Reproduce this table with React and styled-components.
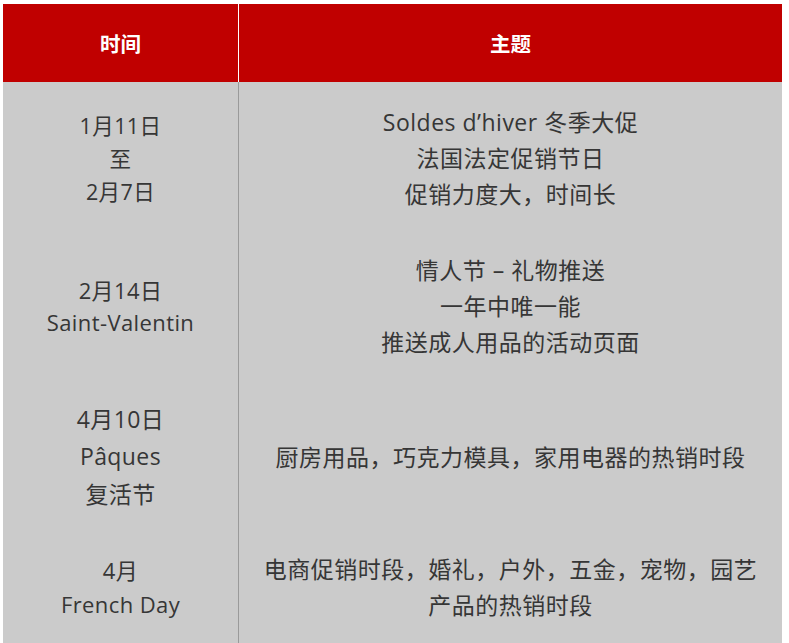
import React from "react";
import styled, { createGlobalStyle } from "styled-components";

const GlobalStyle = createGlobalStyle`
    html, body {
        margin: 0;
        padding: 0;
        background: #ffffff;
        overflow: hidden;
    }
`;

const rows = [
    {
        height: 152,
        dateSize: 21.5,
        dateLine: 33,
        date: ["1月11日", "至", "2月7日"],
        theme: ["Soldes d’hiver 冬季大促", "法国法定促销节日", "促销力度大，时间长"],
    },
    {
        height: 144,
        dateSize: 22,
        dateLine: 32,
        date: ["2月14日", "Saint-Valentin"],
        theme: ["情人节 – 礼物推送", "一年中唯一能", "推送成人用品的活动页面"],
    },
    {
        height: 158,
        dateSize: 23,
        dateLine: 37.5,
        date: ["4月10日", "Pâques", "复活节"],
        theme: ["厨房用品，巧克力模具，家用电器的热销时段"],
    },
    {
        height: 110,
        padBottom: 9,
        dateSize: 22,
        dateLine: 34,
        date: ["4月", "French Day"],
        theme: ["电商促销时段，婚礼，户外，五金，宠物，园艺产品的热销时段"],
    },
];

const App = () => {
    return (
        <Page>
            <GlobalStyle />
            <Table>
                <HeadRow>
                    <HeadCell>时间</HeadCell>
                    <HeadCell divider>主题</HeadCell>
                </HeadRow>
                {rows.map((row, i) => (
                    <BodyRow key={i} h={row.height} pb={row.padBottom || 0}>
                        <DateCell size={row.dateSize} line={row.dateLine}>
                            {row.date.map((t, j) => (
                                <span key={j}>{t}</span>
                            ))}
                        </DateCell>
                        <ThemeCell>
                            {row.theme.map((t, j) => (
                                <span key={j}>{t}</span>
                            ))}
                        </ThemeCell>
                    </BodyRow>
                ))}
            </Table>
        </Page>
    );
};

const Page = styled.div`
    padding: 4px 7px 0 3px;
    font-family: "Open Sans", "Noto Sans CJK SC", sans-serif;
`;

const Table = styled.div`
    width: 779px;
    display: flex;
    flex-direction: column;
`;

const HeadRow = styled.div`
    display: grid;
    grid-template-columns: 235px 1fr;
    height: 78px;
    background: #c00000;
`;

const HeadCell = styled.div`
    display: flex;
    align-items: center;
    justify-content: center;
    color: #ffffff;
    font-family: "Noto Sans CJK SC", sans-serif;
    font-weight: 700;
    font-size: 20.5px;
    border-left: ${props => (props.divider ? "1px solid #ffffff" : "none")};
`;

const BodyRow = styled.div`
    display: grid;
    grid-template-columns: 235px 1fr;
    height: ${props => props.h}px;
    background: #cbcbcb;

    & > div {
        padding-bottom: ${props => props.pb}px;
    }
`;

const DateCell = styled.div`
    display: flex;
    flex-direction: column;
    align-items: center;
    justify-content: center;
    color: #363636;
    font-size: ${props => props.size}px;
    line-height: ${props => props.line}px;
    letter-spacing: 0.4px;
    text-align: center;
`;

const ThemeCell = styled.div`
    display: flex;
    flex-direction: column;
    align-items: center;
    justify-content: center;
    border-left: 1px solid #9a9a9a;
    padding-left: 18px;
    padding-right: 18px;
    color: #363636;
    font-size: 23px;
    line-height: 36px;
    letter-spacing: 0.5px;
    text-align: center;
`;

export default App;
